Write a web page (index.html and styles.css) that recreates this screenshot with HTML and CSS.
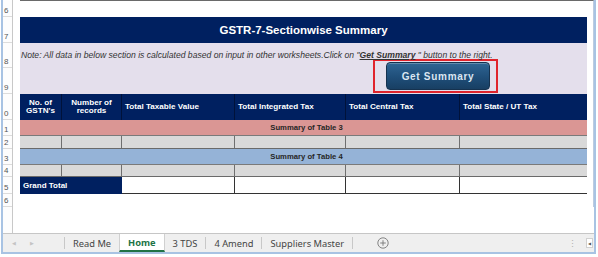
FILE: index.html
```html
<!DOCTYPE html>
<html>
<head>
<meta charset="utf-8">
<link rel="stylesheet" href="styles.css">
</head>
<body>
<div class="window">
  <div class="sheet">
    <div class="rowheads">
      <div class="rh h17">6</div>
      <div class="rh h26">7</div>
      <div class="rh h25">8</div>
      <div class="rh h26">9</div>
      <div class="rh h26">0</div>
      <div class="rh h16">1</div>
      <div class="rh h13">2</div>
      <div class="rh h16">3</div>
      <div class="rh h12">4</div>
      <div class="rh h17">5</div>
      <div class="rh h13">6</div>
    </div>
    <div class="canvas">
      <div class="frame">
        <div class="block">
          <div class="title">GSTR-7-Sectionwise Summary</div>
          <div class="note">
            <div class="note-text">Note: All data in below section is calculated based on input in other worksheets.Click on "<b><u>Get Summary</u></b> " button to the right.</div>
            <div class="btn-wrap">
              <div class="btn">Get Summary</div>
            </div>
          </div>
          <div class="grid head">
            <div class="c center">No. of<br>GSTN's</div>
            <div class="c center">Number of<br>records</div>
            <div class="c">Total Taxable Value</div>
            <div class="c">Total Integrated Tax</div>
            <div class="c">Total Central Tax</div>
            <div class="c">Total State / UT Tax</div>
          </div>
          <div class="section pink">Summary of Table 3</div>
          <div class="grid gray g13">
            <div class="c"></div><div class="c"></div><div class="c"></div><div class="c"></div><div class="c"></div><div class="c"></div>
          </div>
          <div class="section blue">Summary of Table 4</div>
          <div class="grid gray g12">
            <div class="c"></div><div class="c"></div><div class="c"></div><div class="c"></div><div class="c"></div><div class="c"></div>
          </div>
          <div class="grid total">
            <div class="c gt">Grand Total</div>
            <div class="c w"></div><div class="c w"></div><div class="c w"></div><div class="c w last"></div>
          </div>
        </div>
      </div>
    </div>
  </div>
  <div class="tabbar">
    <div class="nav"><span class="arr">&#9664;</span><span class="arr">&#9654;</span></div>
    <div class="tab">Read Me</div>
    <div class="tab active">Home</div>
    <div class="tab">3 TDS</div>
    <div class="tab">4 Amend</div>
    <div class="tab">Suppliers Master</div>
    <div class="add">
      <svg width="12" height="12" viewBox="0 0 12 12"><circle cx="6" cy="6" r="5.2" fill="none" stroke="#777" stroke-width="0.9"/><path d="M6 3.2V8.8M3.2 6H8.8" stroke="#777" stroke-width="0.9"/></svg>
    </div>
    <div class="spacer"></div>
    <div class="dots">&#8942;</div>
    <div class="scrollbox"><span>&#9664;</span></div>
  </div>
</div>
</body>
</html>
```

FILE: styles.css
```css
* { box-sizing: border-box; }
html, body { margin: 0; padding: 0; background: #fff; }
body { width: 598px; height: 257px; overflow: hidden; font-family: "Liberation Sans", Arial, sans-serif; }

.window {
  margin-left: 1px;
  width: 595px;
  height: 254px;
  border-left: 2px solid #a8c3e3;
  border-right: 2px solid #a8c3e3;
  border-bottom: 2px solid #a8c3e3;
  display: flex;
  flex-direction: column;
}

.sheet { display: flex; height: 233px; }

.rowheads {
  width: 10px;
  border-right: 1px solid #c8c8c8;
  display: flex;
  flex-direction: column;
  background: #fdfdfd;
}
.rh {
  border-bottom: 1px solid #dcdcdc;
  font-size: 8px;
  color: #555;
  display: flex;
  align-items: flex-end;
  padding-left: 1px;
  padding-bottom: 1px;
  line-height: 8px;
}
.h17 { height: 17px; } .h26 { height: 26px; } .h25 { height: 25px; }
.h16 { height: 16px; } .h13 { height: 13px; } .h12 { height: 12px; }

.canvas { flex: 1; padding-left: 7px; }
.frame {
  width: 574px;
  height: 207px;
  border-top: 1px solid #6a6a6a;
  border-right: 1px solid #bccbe0;
  padding-top: 16px;
}
.block { width: 567px; }

.title {
  background: #002060;
  color: #fff;
  height: 26px;
  font-weight: bold;
  font-size: 11.5px;
  display: flex;
  align-items: center;
  justify-content: center;
}

.note {
  background: #e4dfec;
  height: 51px;
  padding-top: 8px;
  padding-left: 1px;
}
.note-text {
  font-style: italic;
  font-size: 8.6px;
  line-height: 8px;
  color: #333;
  white-space: nowrap;
}
.btn-wrap {
  margin-left: 352px;
  width: 125px;
  height: 34px;
  border: 2px solid #e0242c;
  padding: 1px 0 0 11px;
}
.btn {
  width: 104px;
  height: 28px;
  border-radius: 4px;
  background: linear-gradient(#2f6593, #1f4e79 55%, #183f63);
  border: 1px solid #16324f;
  box-shadow: inset 0 1px 0 rgba(255,255,255,0.25);
  color: #dbe6f2;
  font-weight: bold;
  font-size: 10px;
  letter-spacing: 0.7px;
  display: flex;
  align-items: center;
  justify-content: center;
}

.grid {
  display: grid;
  grid-template-columns: 42px 60px 113px 111px 114px 127px;
}
.c { border-right: 1px solid #555; }
.c:last-child { border-right: none; }

.head { background: #002060; height: 26px; }
.head .c {
  color: #fff;
  font-weight: bold;
  font-size: 8.1px;
  line-height: 8.5px;
  display: flex;
  align-items: center;
  padding-left: 3px;
  border-right-color: #00123a;
}
.head .c.center { justify-content: center; text-align: center; padding-left: 0; }

.section {
  height: 16px;
  font-weight: bold;
  font-size: 7.7px;
  color: #262626;
  display: flex;
  align-items: center;
  justify-content: center;
  border-bottom: 1px solid #7a7a7a;
  padding-left: 6px;
}
.pink { background: #da9694; }
.blue { background: #95b3d7; }

.gray { background: #d9d9d9; border-bottom: 1px solid #6a6a6a; }
.g13 { height: 13px; }
.g12 { height: 12px; }
.gray .c { border-right-color: #6f6f6f; }

.total { height: 17px; grid-template-columns: 102px 113px 111px 114px 127px; }
.total .c { border-right: 1px solid #333; }
.total .gt {
  background: #002060;
  color: #fff;
  font-weight: bold;
  font-size: 8px;
  display: flex;
  align-items: center;
  padding-left: 3px;
  border-right: none;
}
.total .w { border-bottom: 1px solid #333; }
.total .w.last { border-right: none; }

.tabbar {
  height: 19px;
  border-top: 1px solid #c6c6c6;
  background: #efefef;
  display: flex;
  align-items: stretch;
  font-family: "Noto Sans", "Open Sans", sans-serif;
  font-size: 9.3px;
  color: #444;
}
.nav {
  width: 62px;
  display: flex;
  align-items: center;
  gap: 14px;
  padding-left: 9px;
  border-right: 1px solid #c8c8c8;
  margin: 3px 0;
}
.arr { font-size: 5px; color: #c4c4c4; }
.tab {
  display: flex;
  align-items: center;
  padding: 0 8px;
  border-right: 1px solid #c8c8c8;
  margin: 3px 0;
  white-space: nowrap;
}
.tab.active {
  margin: 0 0 0 -1px;
  background: #fff;
  color: #217346;
  font-weight: bold;
  padding: 0 8px;
  border-left: 1px solid #d0d0d0;
  border-right: 1px solid #d0d0d0;
  border-bottom: 2px solid #217346;
}
.add { display: flex; align-items: center; padding-left: 24px; }
.spacer { flex: 1; }
.dots { display: flex; align-items: center; color: #b0b0b0; font-size: 9px; padding-right: 9px; }
.scrollbox {
  width: 7px;
  margin: 4px 1px 4px 0;
  background: #fff;
  border: 1px solid #d0d0d0;
  display: flex;
  align-items: center;
  justify-content: center;
  font-size: 4px;
  color: #555;
}
```
